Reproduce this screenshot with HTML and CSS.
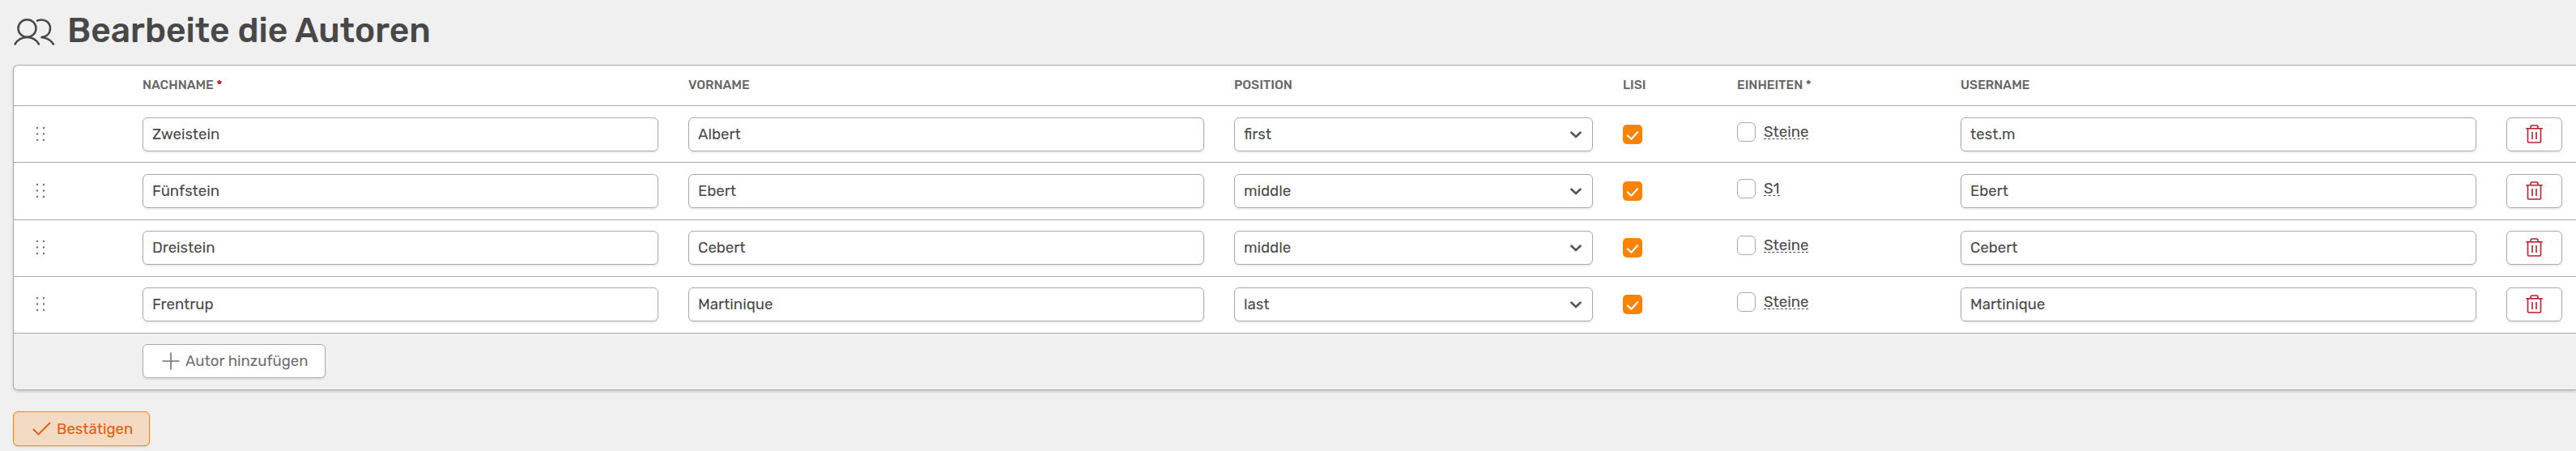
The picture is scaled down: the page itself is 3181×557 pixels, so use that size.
FILE: index.html
```html
<!DOCTYPE html>
<html lang="de">
<head>
<meta charset="utf-8">
<title>Bearbeite die Autoren</title>
<link rel="stylesheet" href="styles.css">
</head>
<body>
<svg class="defs" width="0" height="0">
  <symbol id="i-grip" viewBox="0 0 12 19"><g fill="#777"><circle cx="2" cy="2" r="1.25"/><circle cx="10" cy="2" r="1.25"/><circle cx="2" cy="9.5" r="1.25"/><circle cx="10" cy="9.5" r="1.25"/><circle cx="2" cy="17" r="1.25"/><circle cx="10" cy="17" r="1.25"/></g></symbol>
  <symbol id="i-trash" viewBox="0 0 21 23"><g fill="none" stroke="#c01c2c" stroke-width="1.6"><path d="M.3 4.8h20.4"/><path d="M2.500 5v16q0 1 1 1h14q1 0 1-1V5"/><path d="M6 4.500V2.800Q6 1 7.800 1h5.400Q15 1 15 2.800v1.700"/><path d="M8 9v9M13 9v9"/></g></symbol>
  <symbol id="i-chev" viewBox="0 0 14 9"><path d="M1.500 1.700 7 6.900l5.500-5.200" fill="none" stroke="#555" stroke-width="2.600" stroke-linecap="round"/></symbol>
  <symbol id="i-tick" viewBox="0 0 24 24"><path d="m5.200 12.700 5.300 5L18.800 8.500" fill="none" stroke="#fff" stroke-width="2"/></symbol>
</svg>
<main class="page">
  <h1 class="title">
    <svg class="title-icon" width="52" height="36" viewBox="0 0 52 36"><g fill="none" stroke="#484848" stroke-width="2.500" stroke-linecap="round"><ellipse cx="17.500" cy="13" rx="11" ry="10.700"/><path d="M2.500 32.500C5.500 27.500 10.500 24 17.500 24s11.500 3.500 14.500 8.500"/><path d="M30 3.500C38.500.5 46 5 46 13c0 6-4 10.500-11.500 11 7.500.5 12 3 15.500 8.500"/></g></svg>
    <span>Bearbeite die Autoren</span>
  </h1>
  <section class="table">
    <div class="row head">
      <span></span><span class="name">NACHNAME <i class="req">*</i></span><span>VORNAME</span><span>POSITION</span><span>LISI</span><span>EINHEITEN *</span><span>USERNAME</span>
    </div>
    <div class="row">
      <svg class="grip"><use href="#i-grip"/></svg>
      <div class="field">Zweistein</div><div class="field">Albert</div>
      <div class="field select">first<svg class="chev"><use href="#i-chev"/></svg></div>
      <div class="on"><svg class="tick"><use href="#i-tick"/></svg></div>
      <div class="unit"><span class="off"></span><span class="abbr">Steine</span></div>
      <div class="field">test.m</div>
      <div class="del"><svg class="trash"><use href="#i-trash"/></svg></div>
    </div>
    <div class="row tall">
      <svg class="grip"><use href="#i-grip"/></svg>
      <div class="field">Fünfstein</div><div class="field">Ebert</div>
      <div class="field select">middle<svg class="chev"><use href="#i-chev"/></svg></div>
      <div class="on"><svg class="tick"><use href="#i-tick"/></svg></div>
      <div class="unit"><span class="off"></span><span class="abbr">S1</span></div>
      <div class="field">Ebert</div>
      <div class="del"><svg class="trash"><use href="#i-trash"/></svg></div>
    </div>
    <div class="row low">
      <svg class="grip"><use href="#i-grip"/></svg>
      <div class="field">Dreistein</div><div class="field">Cebert</div>
      <div class="field select">middle<svg class="chev"><use href="#i-chev"/></svg></div>
      <div class="on"><svg class="tick"><use href="#i-tick"/></svg></div>
      <div class="unit"><span class="off"></span><span class="abbr">Steine</span></div>
      <div class="field">Cebert</div>
      <div class="del"><svg class="trash"><use href="#i-trash"/></svg></div>
    </div>
    <div class="row low">
      <svg class="grip"><use href="#i-grip"/></svg>
      <div class="field">Frentrup</div><div class="field">Martinique</div>
      <div class="field select">last<svg class="chev"><use href="#i-chev"/></svg></div>
      <div class="on"><svg class="tick"><use href="#i-tick"/></svg></div>
      <div class="unit"><span class="off"></span><span class="abbr">Steine</span></div>
      <div class="field">Martinique</div>
      <div class="del"><svg class="trash"><use href="#i-trash"/></svg></div>
    </div>
    <div class="foot">
      <div class="add"><svg width="22" height="22" viewBox="0 0 22 22"><path d="M11 .5v21M.5 11h21" stroke="#707070" stroke-width="1.600"/></svg><span>Autor hinzufügen</span></div>
    </div>
  </section>
  <div class="confirm"><svg width="23" height="17" viewBox="0 0 23 17"><path d="M1 9 7.500 15.500 22 1" fill="none" stroke="#e95a0c" stroke-width="1.800"/></svg><span>Bestätigen</span></div>
</main>
</body>
</html>
```
FILE: styles.css
```css
* { box-sizing: border-box; }
body { margin: 0; background: #f0f0f0; color: #484848; font: 18.6px/24px Rubik, Roboto, sans-serif; overflow: hidden; }
svg { display: block; flex: none; }
.defs { height: 0; }
.page { padding-left: 16px; height: 557px; }
.title { margin: 0; height: 80px; display: flex; align-items: flex-start; gap: 15px; font-size: 42.6px; line-height: 50px; font-weight: 500; white-space: nowrap; }
.title span { padding-top: 13px; }
.title-icon { margin-top: 22px; }
.table { height: 402px; border: 1px solid #aaa; border-right: 0; border-radius: 6px 0 0 6px; background: #fff; box-shadow: 0 2px 3px rgba(0, 0, 0, .15); overflow: hidden; }
.row { display: grid; grid-template-columns: 95px 637px 637px 443px 104px 239px 637px 69px; column-gap: 37px; align-items: start; height: 70px; padding: 14px 0 0 27px; border-bottom: 1px solid #aaa; }
.head { height: 50px; padding-top: 12px; font-size: 15.6px; font-weight: 500; color: #666; }
.req { color: #be1e2d; font-style: normal; font-weight: 700; }
.tall { height: 71px; }
.low { padding-top: 13px; }
.grip { width: 12px; height: 19px; margin-top: 11px; }
.field, .del, .add { height: 42px; background: #fff; border: 1px solid #aaa; border-radius: 6px; box-shadow: 0 2px 2px rgba(0, 0, 0, .07); }
.field { padding: 8px 11px; }
.select { display: flex; justify-content: space-between; padding-right: 13px; }
.chev { width: 14px; height: 9px; margin-top: 8px; }
.on { width: 24px; height: 24px; margin-top: 9px; border-radius: 5px; background: #fa8304; }
.tick { width: 24px; height: 24px; }
.unit { display: flex; align-items: flex-start; gap: 10px; padding-top: 6px; }
.off { width: 23px; height: 24px; border: 1px solid #aaa; border-radius: 6px; background: #fff; }
.abbr { height: 21px; line-height: 24px; border-bottom: 1px dashed #484848; }
.del { padding: 8px 23px; }
.trash { width: 21px; height: 23px; }
.foot { height: 70px; padding: 13px 0 0 159px; background: #f0f0f0; }
.add { width: 226px; display: flex; align-items: center; gap: 7px; padding-left: 23px; color: #707070; white-space: nowrap; }
.confirm { width: 169px; height: 43px; margin-top: 26px; display: flex; align-items: center; gap: 7px; padding-left: 23px; border: 1px solid #fa8304; border-radius: 6px; background: #f3dac3; color: #e95a0c; box-shadow: 0 2px 2px rgba(0, 0, 0, .07); }
```
